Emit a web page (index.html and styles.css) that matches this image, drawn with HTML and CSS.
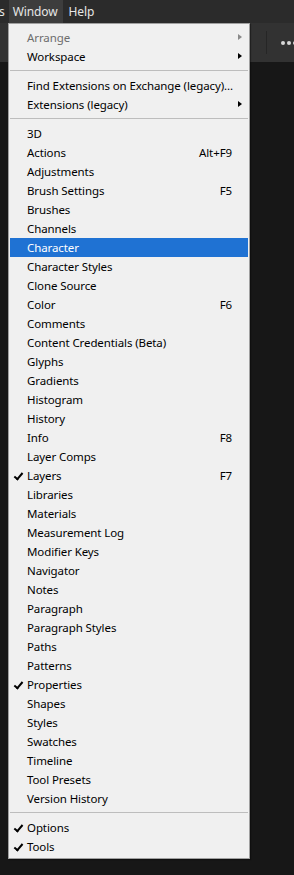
FILE: index.html
```html
<!DOCTYPE html>
<html lang="en">
<head>
    <meta charset="UTF-8">
    <meta name="viewport" content="width=device-width, initial-scale=1.0">
    <title>Window menu</title>
    <link rel="stylesheet" href="styles.css">
</head>
<body>
    <div class="menubar">
        <span class="menubar-item cut">s</span>
        <span class="menubar-item open">Window</span>
        <span class="menubar-item">Help</span>
    </div>
    <div class="toolbar">
        <span class="toolbar-sep"></span>
        <span class="dots"><i></i><i></i><i></i></span>
    </div>
    <div class="workspace">
        <div class="menu">
            <div class="item disabled"><span class="check"></span><span class="label">Arrange</span><span class="key"></span><span class="sub"></span></div>
            <div class="item"><span class="check"></span><span class="label">Workspace</span><span class="key"></span><span class="sub"></span></div>
            <div class="sep"></div>
            <div class="item"><span class="check"></span><span class="label">Find Extensions on Exchange (legacy)...</span><span class="key"></span><span class="arrow"></span></div>
            <div class="item"><span class="check"></span><span class="label">Extensions (legacy)</span><span class="key"></span><span class="sub"></span></div>
            <div class="sep"></div>
            <div class="item"><span class="check"></span><span class="label">3D</span><span class="key"></span><span class="arrow"></span></div>
            <div class="item"><span class="check"></span><span class="label">Actions</span><span class="key">Alt+F9</span><span class="arrow"></span></div>
            <div class="item"><span class="check"></span><span class="label">Adjustments</span><span class="key"></span><span class="arrow"></span></div>
            <div class="item"><span class="check"></span><span class="label">Brush Settings</span><span class="key">F5</span><span class="arrow"></span></div>
            <div class="item"><span class="check"></span><span class="label">Brushes</span><span class="key"></span><span class="arrow"></span></div>
            <div class="item"><span class="check"></span><span class="label">Channels</span><span class="key"></span><span class="arrow"></span></div>
            <div class="item active"><span class="check"></span><span class="label">Character</span><span class="key"></span><span class="arrow"></span></div>
            <div class="item"><span class="check"></span><span class="label">Character Styles</span><span class="key"></span><span class="arrow"></span></div>
            <div class="item"><span class="check"></span><span class="label">Clone Source</span><span class="key"></span><span class="arrow"></span></div>
            <div class="item"><span class="check"></span><span class="label">Color</span><span class="key">F6</span><span class="arrow"></span></div>
            <div class="item"><span class="check"></span><span class="label">Comments</span><span class="key"></span><span class="arrow"></span></div>
            <div class="item"><span class="check"></span><span class="label">Content Credentials (Beta)</span><span class="key"></span><span class="arrow"></span></div>
            <div class="item"><span class="check"></span><span class="label">Glyphs</span><span class="key"></span><span class="arrow"></span></div>
            <div class="item"><span class="check"></span><span class="label">Gradients</span><span class="key"></span><span class="arrow"></span></div>
            <div class="item"><span class="check"></span><span class="label">Histogram</span><span class="key"></span><span class="arrow"></span></div>
            <div class="item"><span class="check"></span><span class="label">History</span><span class="key"></span><span class="arrow"></span></div>
            <div class="item"><span class="check"></span><span class="label">Info</span><span class="key">F8</span><span class="arrow"></span></div>
            <div class="item"><span class="check"></span><span class="label">Layer Comps</span><span class="key"></span><span class="arrow"></span></div>
            <div class="item"><span class="check on"></span><span class="label">Layers</span><span class="key">F7</span><span class="arrow"></span></div>
            <div class="item"><span class="check"></span><span class="label">Libraries</span><span class="key"></span><span class="arrow"></span></div>
            <div class="item"><span class="check"></span><span class="label">Materials</span><span class="key"></span><span class="arrow"></span></div>
            <div class="item"><span class="check"></span><span class="label">Measurement Log</span><span class="key"></span><span class="arrow"></span></div>
            <div class="item"><span class="check"></span><span class="label">Modifier Keys</span><span class="key"></span><span class="arrow"></span></div>
            <div class="item"><span class="check"></span><span class="label">Navigator</span><span class="key"></span><span class="arrow"></span></div>
            <div class="item"><span class="check"></span><span class="label">Notes</span><span class="key"></span><span class="arrow"></span></div>
            <div class="item"><span class="check"></span><span class="label">Paragraph</span><span class="key"></span><span class="arrow"></span></div>
            <div class="item"><span class="check"></span><span class="label">Paragraph Styles</span><span class="key"></span><span class="arrow"></span></div>
            <div class="item"><span class="check"></span><span class="label">Paths</span><span class="key"></span><span class="arrow"></span></div>
            <div class="item"><span class="check"></span><span class="label">Patterns</span><span class="key"></span><span class="arrow"></span></div>
            <div class="item"><span class="check on"></span><span class="label">Properties</span><span class="key"></span><span class="arrow"></span></div>
            <div class="item"><span class="check"></span><span class="label">Shapes</span><span class="key"></span><span class="arrow"></span></div>
            <div class="item"><span class="check"></span><span class="label">Styles</span><span class="key"></span><span class="arrow"></span></div>
            <div class="item"><span class="check"></span><span class="label">Swatches</span><span class="key"></span><span class="arrow"></span></div>
            <div class="item"><span class="check"></span><span class="label">Timeline</span><span class="key"></span><span class="arrow"></span></div>
            <div class="item"><span class="check"></span><span class="label">Tool Presets</span><span class="key"></span><span class="arrow"></span></div>
            <div class="item"><span class="check"></span><span class="label">Version History</span><span class="key"></span><span class="arrow"></span></div>
            <div class="sep"></div>
            <div class="item"><span class="check on"></span><span class="label">Options</span><span class="key"></span><span class="arrow"></span></div>
            <div class="item"><span class="check on"></span><span class="label">Tools</span><span class="key"></span><span class="arrow"></span></div>
        </div>
    </div>
</body>
</html>
```

FILE: styles.css
```css
body {
    margin: 0;
    background-color: #171717;
    font-family: 'Noto Sans', sans-serif;
    font-size: 11.5px;
    letter-spacing: -0.1px;
    height: 875px;
    overflow: hidden;
    position: relative;
}

.menubar {
    height: 23px;
    background-color: #2b2b2b;
    display: flex;
    align-items: stretch;
    color: #e6e6e6;
    font-size: 12px;
}

.menubar-item {
    display: flex;
    align-items: center;
    padding: 0 6px;
}

.menubar-item.cut {
    margin-left: -7px;
    padding-right: 4px;
}

.menubar-item.open {
    background-color: #3d3d3d;
    padding: 0 5px 0 4px;
}

.toolbar {
    height: 39px;
    background-color: #323232;
    display: flex;
    align-items: center;
    justify-content: flex-end;
    overflow: hidden;
}

.toolbar-sep {
    width: 1px;
    height: 23px;
    background-color: #262626;
    margin-right: 14px;
}

.dots {
    display: flex;
    gap: 2px;
    margin-right: -3px;
    flex: none;
}

.dots i {
    width: 4px;
    height: 4px;
    border-radius: 50%;
    background-color: #d8d8d8;
}

.workspace {
    height: 813px;
}

/* the dropdown sits over the toolbar */
.menu {
    position: absolute;
    left: 8px;
    top: 23px;
    width: 240px;
    background-color: #f0f0f0;
    border: 1px solid #a0a0a0;
    padding: 4px 0 2px;
    box-shadow: 1px 1px 1px rgba(0, 0, 0, 0.35);
}

.item {
    display: flex;
    align-items: center;
    height: 19px;
    margin: 0 1px;
    color: #000;
}

.item.disabled {
    color: #6d6d6d;
}

.item.active {
    background-color: #1f72d3;
    color: #fff;
}

.check {
    width: 17px;
    height: 19px;
    flex: none;
    position: relative;
}

.check.on::before {
    content: "";
    position: absolute;
    left: 6px;
    top: 5px;
    width: 3px;
    height: 7px;
    border-right: 2px solid #000;
    border-bottom: 2px solid #000;
    transform: rotate(40deg);
}

.label {
    flex: 1;
    white-space: nowrap;
    line-height: 19px;
}

.key {
    white-space: nowrap;
    line-height: 19px;
}

.arrow,
.sub {
    width: 16px;
    height: 19px;
    flex: none;
    position: relative;
}

.sub::before {
    content: "";
    position: absolute;
    left: 6px;
    top: 6px;
    border-left: 4px solid #000;
    border-top: 3.5px solid transparent;
    border-bottom: 3.5px solid transparent;
}

.item.disabled .sub::before {
    border-left-color: #8a8a8a;
}

.sep {
    height: 1px;
    margin: 4px 1px 5px;
    background-color: #bdbdbd;
}
```
